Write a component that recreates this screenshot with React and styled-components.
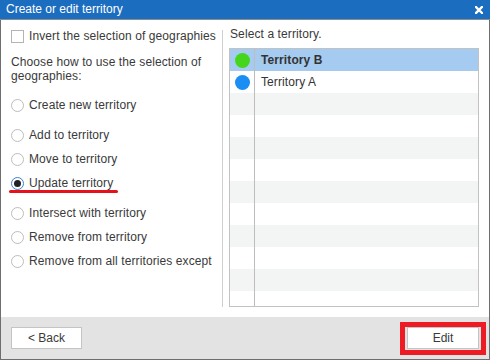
import React from 'react';
import styled, { createGlobalStyle } from 'styled-components';

const GlobalStyle = createGlobalStyle`
    html, body {
        margin: 0;
        padding: 0;
        background: #fff;
    }
    body {
        font-family: "Liberation Sans", Arial, sans-serif;
        font-size: 12px;
        color: #3a3a3a;
    }
`;

const Window = styled.div`
    width: 490px;
    height: 360px;
    box-sizing: border-box;
    border: 1px solid #6e6e6e;
    border-top: none;
    display: flex;
    flex-direction: column;
    background: #fff;
`;

const TitleBar = styled.div`
    height: 19px;
    margin: 0 -1px;
    padding: 0 7px 0 6px;
    background: #1b6dbf;
    border-bottom: 1px solid #8c8c8c;
    color: #fff;
    display: flex;
    align-items: center;
    justify-content: space-between;
    font-size: 12px;
    line-height: 19px;
`;

const CloseButton = styled.span`
    display: flex;
    align-items: center;
    width: 8px;
    height: 8px;
`;

const Body = styled.div`
    height: 297px;
    box-sizing: border-box;
    padding: 9px 0 10px;
    display: flex;
    letter-spacing: 0.1px;
`;

const LeftColumn = styled.div`
    width: 222px;
    box-sizing: border-box;
    padding-left: 10px;
    margin-top: 1px;
    border-right: 1px solid #cfcfcf;
    display: flex;
    flex-direction: column;
`;

const CheckRow = styled.label`
    display: flex;
    align-items: center;
    gap: 5px;
    height: 14px;
    margin-top: -1px;
    line-height: 14px;
`;

const CheckBox = styled.span`
    width: 13px;
    height: 13px;
    box-sizing: border-box;
    border: 1px solid #b4b4b4;
    background: #fff;
`;

const Hint = styled.div`
    margin-top: 12px;
    line-height: 14px;
    width: 200px;
`;

const RadioRow = styled.label`
    position: relative;
    display: flex;
    align-items: center;
    gap: 5px;
    height: 14px;
    line-height: 14px;
    margin-top: ${p => p.$gap}px;

    ${p => p.$marked && `
        &::after {
            content: '';
            position: absolute;
            left: -2px;
            top: 14px;
            width: 109px;
            height: 3px;
            border-radius: 2px;
            background: #e5121c;
        }
    `}
`;

const Radio = styled.span`
    width: 13px;
    height: 13px;
    box-sizing: border-box;
    border-radius: 50%;
    border: 1px solid ${p => (p.$checked ? '#3b7fd0' : '#bdbdbd')};
    background: #fff;
    display: flex;
    align-items: center;
    justify-content: center;

    &::after {
        content: '';
        width: 7px;
        height: 7px;
        border-radius: 50%;
        background: ${p => (p.$checked ? '#222' : 'transparent')};
    }
`;

const RightColumn = styled.div`
    flex: 1;
    box-sizing: border-box;
    padding: 0 10px 0 6px;
    display: flex;
    flex-direction: column;
`;

const ListLabel = styled.div`
    margin: -2px 0 7px 1px;
    line-height: 14px;
`;

const ListBox = styled.div`
    flex: 1;
    border: 1px solid #c2c2c2;
    overflow: hidden;
`;

const Row = styled.div`
    display: flex;
    height: 22px;
    background: #fff;

    &:nth-child(odd) {
        background: #f3f4f4;
    }

    ${p => p.$selected && `
        &:nth-child(odd), & {
            background: #a6cbf0;
        }
    `}
`;

const ColorCell = styled.div`
    width: 24px;
    border-right: 1px solid #bdbdbd;
    display: flex;
    align-items: center;
    justify-content: center;
`;

const Dot = styled.span`
    width: 15px;
    height: 15px;
    border-radius: 50%;
    background: ${p => p.$color};
`;

const NameCell = styled.div`
    flex: 1;
    padding-left: 6px;
    display: flex;
    align-items: center;
    font-weight: ${p => (p.$bold ? 'bold' : 'normal')};
    color: #333;
`;

const Footer = styled.div`
    height: 42px;
    box-sizing: border-box;
    background: #e3e3e3;
    padding: 10px 3px 0 10px;
    display: flex;
    align-items: flex-start;
    justify-content: space-between;
`;

const Button = styled.button`
    width: ${p => p.$width}px;
    height: 22px;
    box-sizing: border-box;
    border: 1px solid #c4c4c4;
    background: #fff;
    font-family: inherit;
    font-size: 12px;
    color: #3a3a3a;
    padding: 0;
    cursor: pointer;
`;

const Highlight = styled.div`
    margin-top: -5px;
    border: 5px solid #ed1c24;
    padding: 0 2px 1px 2px;
    display: flex;
`;

const territories = [
    { name: 'Territory B', color: '#45d61c', selected: true },
    { name: 'Territory A', color: '#1a8ef2' },
];

const options = [
    { label: 'Create new territory', gap: 15 },
    { label: 'Add to territory', gap: 16 },
    { label: 'Move to territory', gap: 10 },
    { label: 'Update territory', gap: 10, checked: true, marked: true },
    { label: 'Intersect with territory', gap: 16 },
    { label: 'Remove from territory', gap: 10 },
    { label: 'Remove from all territories except', gap: 10 },
];

const TOTAL_ROWS = 12;

export default function App() {
    const rows = Array.from({ length: TOTAL_ROWS }, (_, i) => territories[i] || null);

    return (
        <>
            <GlobalStyle />
            <Window>
                <TitleBar>
                    <span>Create or edit territory</span>
                    <CloseButton>
                        <svg width="8" height="8" viewBox="0 0 8 8">
                            <path d="M1 1 L7 7 M7 1 L1 7" stroke="#fff" strokeWidth="2.4" strokeLinecap="square" />
                        </svg>
                    </CloseButton>
                </TitleBar>
                <Body>
                    <LeftColumn>
                        <CheckRow>
                            <CheckBox />
                            Invert the selection of geographies
                        </CheckRow>
                        <Hint>Choose how to use the selection of geographies:</Hint>
                        {options.map(o => (
                            <RadioRow key={o.label} $gap={o.gap} $marked={o.marked}>
                                <Radio $checked={o.checked} />
                                {o.label}
                            </RadioRow>
                        ))}
                    </LeftColumn>
                    <RightColumn>
                        <ListLabel>Select a territory.</ListLabel>
                        <ListBox>
                            {rows.map((t, i) => (
                                <Row key={i} $selected={t && t.selected}>
                                    <ColorCell>{t && <Dot $color={t.color} />}</ColorCell>
                                    <NameCell $bold={t && t.selected}>{t ? t.name : ''}</NameCell>
                                </Row>
                            ))}
                        </ListBox>
                    </RightColumn>
                </Body>
                <Footer>
                    <Button $width={71}>&lt; Back</Button>
                    <Highlight>
                        <Button $width={72}>Edit</Button>
                    </Highlight>
                </Footer>
            </Window>
        </>
    );
}
